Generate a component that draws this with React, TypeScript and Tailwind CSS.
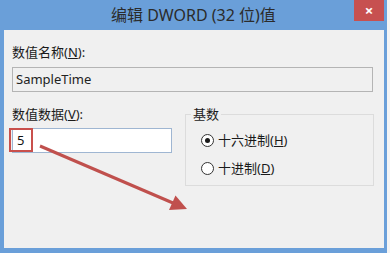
import React from "react";

const font = { fontFamily: "'Noto Sans', 'Noto Sans CJK SC', sans-serif" };

function Radio({ checked, label, hotkey }: { checked: boolean; label: string; hotkey: string }) {
  return (
    <div className="flex items-center h-[16px]">
      <span className="w-[13px] h-[13px] rounded-full border border-[#333] bg-white flex items-center justify-center">
        {checked && <span className="w-[5px] h-[5px] rounded-full bg-[#1a1a1a]" />}
      </span>
      <span className="ml-[4px] text-[13px] leading-[16px] text-[#1a1a1a]">
        {label}(<span className="underline">{hotkey}</span>)
      </span>
    </div>
  );
}

export default function App() {
  return (
    <div className="w-[390px] h-[253px] bg-[#f4f4f4] overflow-hidden" style={font}>
      <div className="relative w-[387px] h-[253px] bg-[#6a9fd9] flex flex-col">
        {/* title bar */}
        <div className="relative h-[30px] flex items-center justify-center">
          <span className="text-[16px] leading-none text-[#2b2b2b] -mt-[1px]">编辑 DWORD (32 位)值</span>
          <div className="absolute right-[3px] top-0 w-[30px] h-[21px] bg-[#c75050] flex items-center justify-center text-white text-[15px] font-bold leading-none">
            ×
          </div>
        </div>

        {/* body */}
        <div className="flex-1 ml-[4px] mr-[3px] mb-[5px] bg-[#f0f0f0] pt-[15px] px-[8px] text-[#1a1a1a]">
          <div className="h-[14px] text-[13px] leading-[14px]">
            数值名称(<span className="underline">N</span>):
          </div>
          <div className="mt-[8px] w-[361px] h-[25px] border border-[#b4b4b4] bg-[#f0f0f0] flex items-center pl-[3px] text-[13px] text-[#222]">
            SampleTime
          </div>

          <div className="mt-[15px] flex items-start">
            <div className="w-[160px]">
              <div className="h-[14px] text-[13px] leading-[14px]">
                数值数据(<span className="underline">V</span>):
              </div>
              <div className="relative mt-[7px] w-[160px] h-[25px] border border-[#9fb6d2] bg-white flex items-center pl-[4px] text-[13px] text-[#111]">
                5
                <div className="absolute -left-[4px] -top-[1px] w-[24px] h-[24px] border-2 border-[#c9504c]" />
              </div>
            </div>

            <fieldset className="ml-[13px] w-[189px] h-[79px] border border-[#dcdcdc] pl-[15px]">
              <legend className="-ml-[10px] px-[2px] h-[14px] text-[13px] leading-[14px]">基数</legend>
              <div className="mt-[11px] flex flex-col gap-[12px]">
                <Radio checked label="十六进制" hotkey="H" />
                <Radio checked={false} label="十进制" hotkey="D" />
              </div>
            </fieldset>
          </div>
        </div>

        {/* annotation arrow */}
        <svg className="absolute left-0 top-0 pointer-events-none" width="387" height="253" viewBox="0 0 387 253">
          <line x1="40" y1="146" x2="173" y2="203" stroke="#c0504d" strokeWidth="3" />
          <polygon points="187,209 169,210 175.5,195.4" fill="#c0504d" />
        </svg>
      </div>
    </div>
  );
}
